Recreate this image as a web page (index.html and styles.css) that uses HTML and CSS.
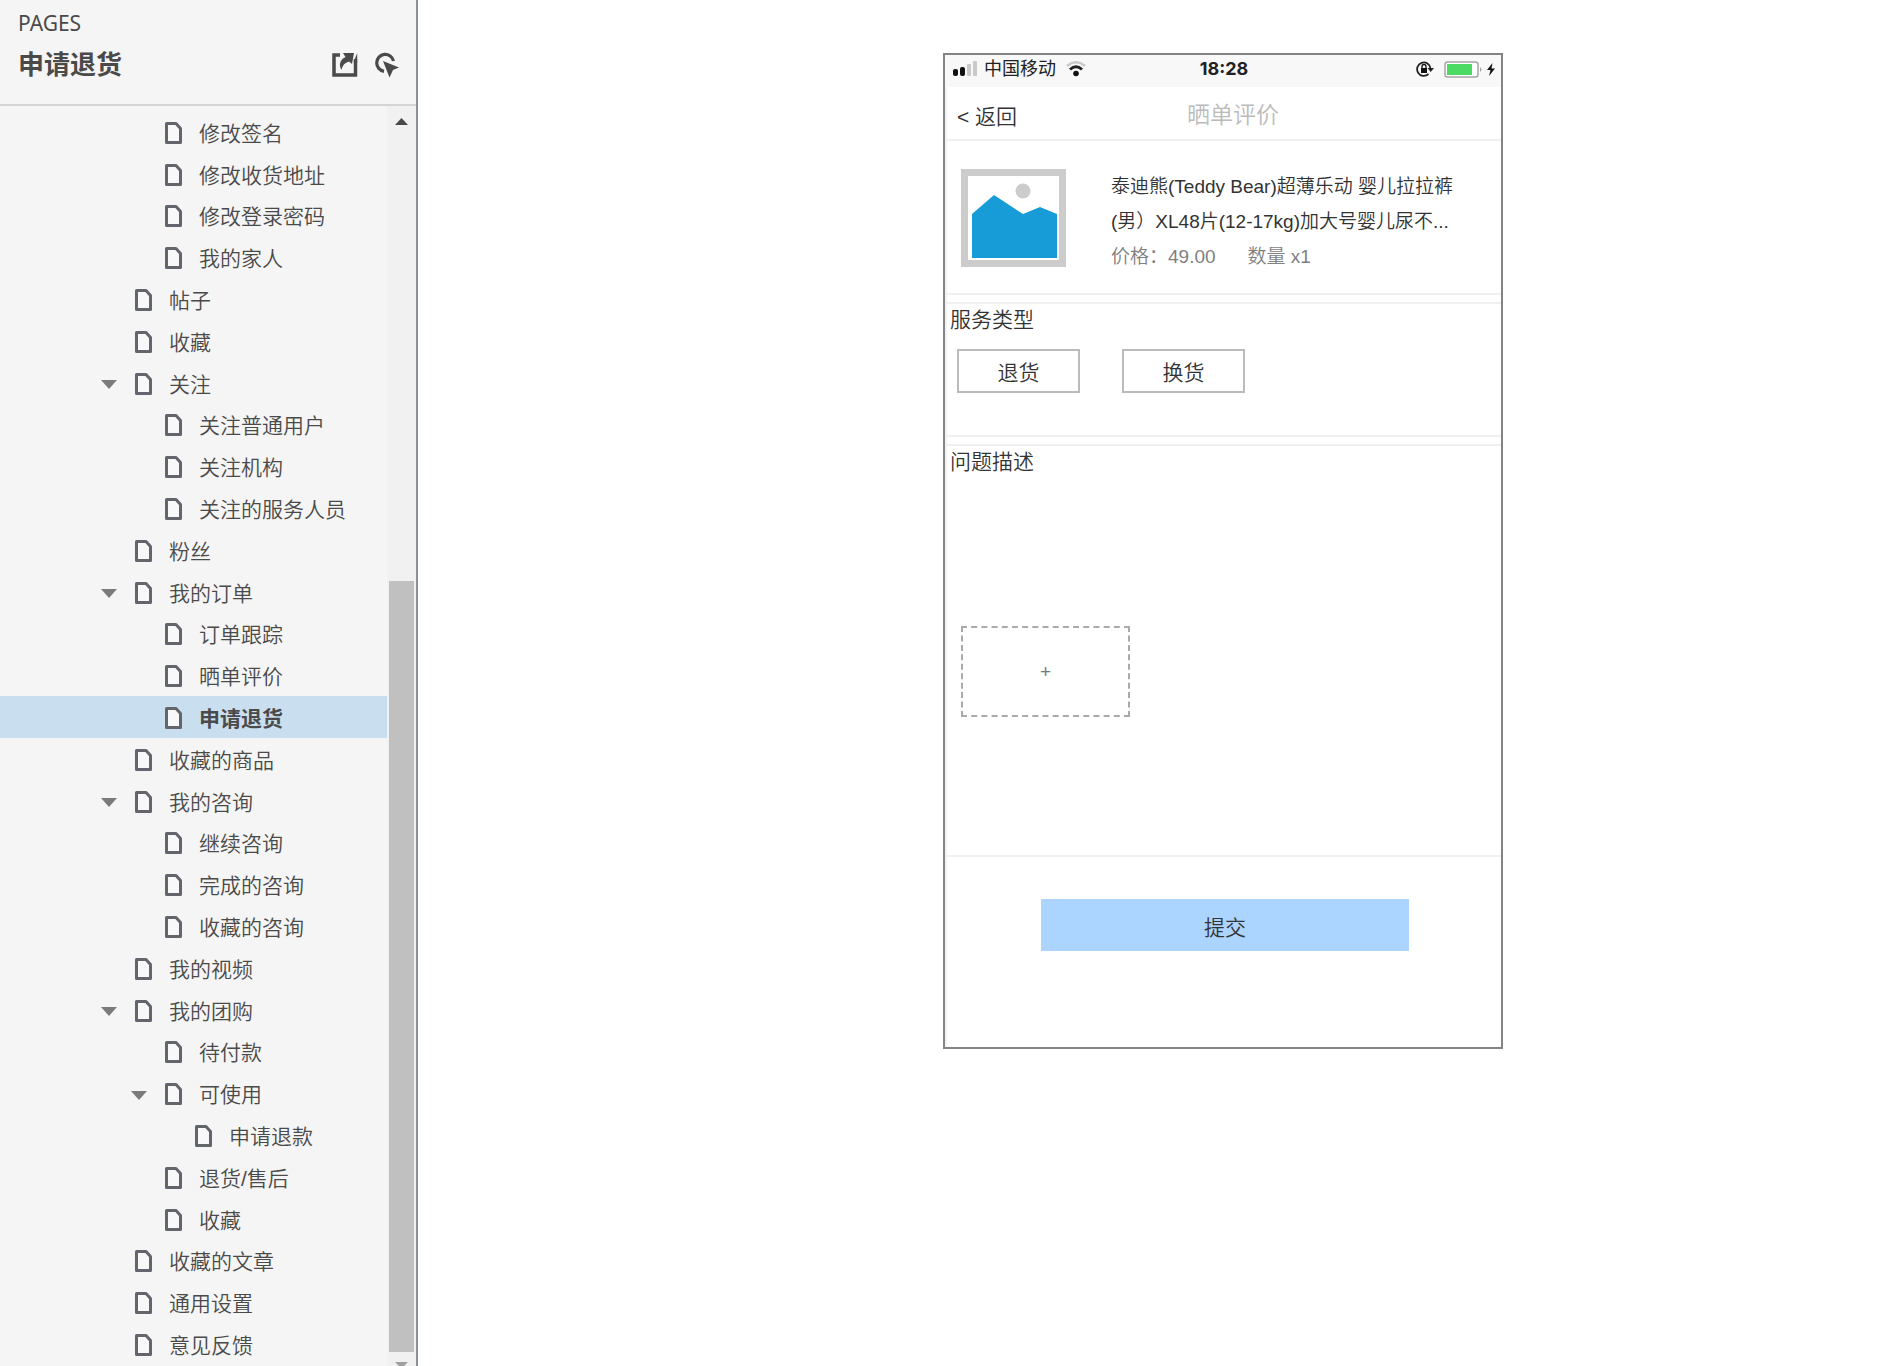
FILE: index.html
```html
<!DOCTYPE html>
<html lang="zh-CN">
<head>
<meta charset="utf-8">
<meta name="viewport" content="width=device-width, initial-scale=1">
<title>申请退货</title>
<link rel="stylesheet" href="styles.css">
</head>
<body>
<svg class="defs" width="0" height="0" aria-hidden="true">
  <symbol id="page" viewBox="0 0 17 22"><path d="M1.500 1.500H11L15.500 6.500V20.500H1.500Z" fill="#f8f8f8" stroke="#62666c" stroke-width="3" stroke-linejoin="round"/></symbol>
  <symbol id="caret" viewBox="0 0 16 9"><path d="M0 0H16L8 9Z" fill="#7b7b7b"/></symbol>
</svg>
<aside class="sidebar">
  <header class="side-head">
    <div class="side-label">PAGES</div>
    <div class="side-row">
      <h1 class="side-title">申请退货</h1>
      <div class="side-tools">
        <button class="tool" aria-label="分享"><svg width="26" height="24" viewBox="0 0 26 24"><path d="M8 2H2V22H23.500V6" fill="none" stroke="#4a4a4a" stroke-width="3.500"/><path d="M11 0H22L20 11L17 8.500C12 10 10.500 13 9.500 17C6 11 9 6 13.500 4Z" fill="#4a4a4a"/><path d="M21.700 9L25.200 0V10Z" fill="#4a4a4a"/></svg></button>
        <button class="tool" aria-label="高亮交互"><svg width="26" height="26" viewBox="0 0 26 26"><path d="M19.500 9A8.500 8.500 0 1 0 10 19.300" fill="none" stroke="#4a4a4a" stroke-width="3.200"/><path d="M9 9L25 15.500L19 18L15.500 25.500Z" fill="#4a4a4a"/></svg></button>
      </div>
    </div>
  </header>
  <div class="side-body">
    <nav class="tree" aria-label="页面">
      <a class="node l3" href="#"><svg class="ico"><use href="#page"/></svg>修改签名</a>
      <a class="node l3" href="#"><svg class="ico"><use href="#page"/></svg>修改收货地址</a>
      <a class="node l3" href="#"><svg class="ico"><use href="#page"/></svg>修改登录密码</a>
      <a class="node l3" href="#"><svg class="ico"><use href="#page"/></svg>我的家人</a>
      <a class="node l2" href="#"><svg class="ico"><use href="#page"/></svg>帖子</a>
      <a class="node l2" href="#"><svg class="ico"><use href="#page"/></svg>收藏</a>
      <a class="node l2" href="#"><svg class="caret"><use href="#caret"/></svg><svg class="ico"><use href="#page"/></svg>关注</a>
      <a class="node l3" href="#"><svg class="ico"><use href="#page"/></svg>关注普通用户</a>
      <a class="node l3" href="#"><svg class="ico"><use href="#page"/></svg>关注机构</a>
      <a class="node l3" href="#"><svg class="ico"><use href="#page"/></svg>关注的服务人员</a>
      <a class="node l2" href="#"><svg class="ico"><use href="#page"/></svg>粉丝</a>
      <a class="node l2" href="#"><svg class="caret"><use href="#caret"/></svg><svg class="ico"><use href="#page"/></svg>我的订单</a>
      <a class="node l3" href="#"><svg class="ico"><use href="#page"/></svg>订单跟踪</a>
      <a class="node l3" href="#"><svg class="ico"><use href="#page"/></svg>晒单评价</a>
      <a class="node l3 current" href="#" aria-current="page"><svg class="ico"><use href="#page"/></svg>申请退货</a>
      <a class="node l2" href="#"><svg class="ico"><use href="#page"/></svg>收藏的商品</a>
      <a class="node l2" href="#"><svg class="caret"><use href="#caret"/></svg><svg class="ico"><use href="#page"/></svg>我的咨询</a>
      <a class="node l3" href="#"><svg class="ico"><use href="#page"/></svg>继续咨询</a>
      <a class="node l3" href="#"><svg class="ico"><use href="#page"/></svg>完成的咨询</a>
      <a class="node l3" href="#"><svg class="ico"><use href="#page"/></svg>收藏的咨询</a>
      <a class="node l2" href="#"><svg class="ico"><use href="#page"/></svg>我的视频</a>
      <a class="node l2" href="#"><svg class="caret"><use href="#caret"/></svg><svg class="ico"><use href="#page"/></svg>我的团购</a>
      <a class="node l3" href="#"><svg class="ico"><use href="#page"/></svg>待付款</a>
      <a class="node l3" href="#"><svg class="caret"><use href="#caret"/></svg><svg class="ico"><use href="#page"/></svg>可使用</a>
      <a class="node l4" href="#"><svg class="ico"><use href="#page"/></svg>申请退款</a>
      <a class="node l3" href="#"><svg class="ico"><use href="#page"/></svg>退货/售后</a>
      <a class="node l3" href="#"><svg class="ico"><use href="#page"/></svg>收藏</a>
      <a class="node l2" href="#"><svg class="ico"><use href="#page"/></svg>收藏的文章</a>
      <a class="node l2" href="#"><svg class="ico"><use href="#page"/></svg>通用设置</a>
      <a class="node l2" href="#"><svg class="ico"><use href="#page"/></svg>意见反馈</a>
    </nav>
    <div class="scrollbar" aria-hidden="true">
      <svg width="13" height="7" viewBox="0 0 13 7"><path d="M0 7L6.500 0L13 7Z" fill="#4a4a4a"/></svg>
      <div class="track"><div class="thumb"></div></div>
      <svg width="13" height="4" viewBox="0 0 13 4"><path d="M0 0H13L9 4H4Z" fill="#a0a0a0"/></svg>
    </div>
  </div>
</aside>
<main class="canvas">
  <section class="phone">
    <div class="status">
      <div class="status-left">
        <svg width="25" height="16" viewBox="0 0 25 16"><rect x="0" y="8" width="5" height="7" rx="2" fill="#111"/><rect x="7" y="6" width="5" height="9" rx="2" fill="#111"/><rect x="14" y="3" width="4" height="12" rx="1" fill="#c9c9c9"/><rect x="20" y="0" width="4" height="15" rx="1" fill="#c9c9c9"/></svg>
        <span>中国移动</span>
        <svg class="wifi" width="20" height="16" viewBox="0 0 20 16"><path d="M1 5Q10 -2.500 19 5" fill="none" stroke="#c9c9c9" stroke-width="2.500"/><path d="M4 8.500Q10 3 16 8.500" fill="none" stroke="#222" stroke-width="3"/><circle cx="10" cy="12.500" r="2.800" fill="#111"/></svg>
      </div>
      <strong class="clock">18:28</strong>
      <div class="status-right">
        <svg width="18" height="16" viewBox="0 0 18 16"><path d="M14.500 7.500A6.700 6.700 0 1 0 12.500 13" fill="none" stroke="#222" stroke-width="1.800"/><path d="M11.500 7H18L14.700 11Z" fill="#222"/><rect x="5" y="7" width="6" height="5" fill="#111"/><path d="M6 7V5.500A2 2 0 0 1 10 5.500V7" fill="none" stroke="#111" stroke-width="1.300"/></svg>
        <svg class="battery" width="39" height="17" viewBox="0 0 39 17"><rect x="1" y="1" width="33" height="15" rx="2.500" fill="#fff" stroke="#a5a5a5" stroke-width="1.500"/><rect x="3" y="3" width="25" height="11" fill="#4cd964"/><path d="M36 6Q39 8.500 36 11Z" fill="#a5a5a5"/></svg>
        <svg width="8" height="13" viewBox="0 0 8 13"><path d="M5.500 0L0 7H3.500L2 13L8 5.500H4.500Z" fill="#111"/></svg>
      </div>
    </div>
    <header class="nav">
      <a class="back" href="#">&lt; 返回</a>
      <h2 class="nav-title">晒单评价</h2>
    </header>
    <article class="product">
      <svg width="105" height="98" viewBox="0 0 105 98" role="img" aria-label="商品图片"><rect width="105" height="98" fill="#ccc"/><rect x="7" y="7" width="91" height="84" fill="#fff"/><circle cx="62" cy="22" r="7.500" fill="#ccc"/><path d="M11 45L33 26L62 45L79 38L96 45V89H11Z" fill="#189cd8"/></svg>
      <div class="info">
        <p>泰迪熊(Teddy Bear)超薄乐动 婴儿拉拉裤<br>(男）XL48片(12-17kg)加大号婴儿尿不...</p>
        <p class="meta"><span>价格：49.00</span><span>数量 x1</span></p>
      </div>
    </article>
    <section class="block service">
      <h3 class="block-title">服务类型</h3>
      <div class="choices">
        <button class="choice">退货</button>
        <button class="choice">换货</button>
      </div>
    </section>
    <section class="block issue">
      <label class="block-title" for="issue">问题描述</label>
      <textarea class="issue-text" id="issue"></textarea>
      <button class="upload" aria-label="添加图片">+</button>
    </section>
    <button class="submit">提交</button>
  </section>
</main>
</body>
</html>
```
FILE: styles.css
```css
* { box-sizing: border-box; }
body {
  margin: 0;
  min-height: 100vh;
  display: flex;
  background: #fff;
  color: #333;
  font-family: "Liberation Sans", "Noto Sans CJK SC", sans-serif;
  font-size: 21px;
  font-weight: 350;
}
h1, h2, h3, p { margin: 0; font-weight: inherit; }
button, textarea { font: inherit; color: inherit; }
a { color: inherit; text-decoration: none; }
svg { flex: none; display: block; }
.defs { position: absolute; }

.sidebar {
  width: 418px;
  flex: none;
  display: flex;
  flex-direction: column;
  background: #f5f5f5;
  border-right: 2px solid #8c9098;
  color: #4a4a4a;
}
.side-head {
  height: 106px;
  padding: 11px 16px 0 18px;
  border-bottom: 2px solid #d5d5d5;
}
.side-label { font: 400 21px/24px "Noto Sans", sans-serif; }
.side-row { display: flex; justify-content: space-between; align-items: center; margin-top: 10px; }
.side-title { font-size: 26px; line-height: 40px; font-weight: 700; }
.side-tools { display: flex; gap: 16px; }
.tool { padding: 0; border: 0; background: none; }

.side-body { flex: 1; display: flex; }
.tree { flex: 1; display: flex; flex-direction: column; padding: 5px 0 1px; }
.node {
  flex: 1;
  display: flex;
  align-items: center;
  padding-top: 4px;
  line-height: 30px;
  white-space: nowrap;
}
.l2 { padding-left: 135px; }
.l3 { padding-left: 165px; }
.l4 { padding-left: 195px; }
.ico { width: 17px; height: 22px; margin: 0 17px 2px 0; }
.caret { width: 16px; height: 9px; margin: 0 18px 0 -34px; }
.current { background: #c9dff0; font-weight: 700; }

.scrollbar {
  width: 29px;
  display: flex;
  flex-direction: column;
  align-items: center;
  padding-top: 12px;
  background: #f1f1f1;
}
.track { flex: 1; width: 25px; display: grid; grid-template-rows: 456fr 771fr; padding-bottom: 10px; }
.thumb { grid-row: 2; background: #c0c0c0; }

.canvas { flex: 1; padding: 53px 0 40px 525px; }
.phone {
  max-width: 560px;
  border: 2px solid #848484;
  box-shadow: inset 2px 0 #f2f2f2;
  padding-bottom: 96px;
  display: flex;
  flex-direction: column;
}
.status {
  display: grid;
  grid-template-columns: 1fr auto 1fr;
  align-items: center;
  height: 32px;
  padding: 0 6px 4px 8px;
  background: #f8f8f8;
  font-size: 18px;
  line-height: 28px;
  color: #222;
}
.status-left, .status-right { display: flex; align-items: center; }
.status-left { gap: 6px; font-weight: 400; }
.wifi { margin-left: 4px; }
.status-right { justify-content: flex-end; }
.battery { margin: 0 4px 0 10px; }
.clock { font: 700 18px/28px Inter, sans-serif; }
.nav {
  display: grid;
  grid-template-columns: 1fr auto 1fr;
  align-items: center;
  height: 54px;
  margin-left: 2px;
  padding: 3px 0 0 10px;
  border-bottom: 2px solid #f0f0f0;
}
.nav-title { margin-left: 8px; font-size: 23px; line-height: 32px; color: #bbb; }
.product {
  display: flex;
  align-items: flex-start;
  gap: 45px;
  height: 154px;
  margin-left: 2px;
  padding: 28px 0 0 14px;
  border-bottom: 2px solid #f0f0f0;
}
.info { font-size: 19px; line-height: 35px; white-space: nowrap; }
.meta { display: flex; gap: 32px; color: #7f7f7f; }
.block {
  display: flex;
  flex-direction: column;
  align-items: flex-start;
  margin: 7px 0 0 2px;
  border-top: 2px solid #f0f0f0;
  border-bottom: 2px solid #f0f0f0;
}
.block-title { margin-left: 3px; font-size: 21px; line-height: 32px; }
.choices { display: flex; gap: 42px; margin: 13px 0 42px 10px; }
.choice { width: 123px; height: 44px; padding: 0; border: 2px solid #bbb; background: #fff; }
.issue-text { align-self: stretch; height: 148px; border: 0; padding: 0 4px; resize: none; outline: 0; background: none; }
.upload {
  width: 169px;
  height: 91px;
  margin: 0 0 138px 14px;
  border: 2px dashed #aaa;
  background: #fff;
  color: #777;
  font-size: 19px;
}
.submit {
  align-self: center;
  width: 368px;
  height: 52px;
  margin-top: 42px;
  margin-left: 4px;
  padding: 2px 0 0;
  border: 0;
  background: #abd4ff;
}
```
